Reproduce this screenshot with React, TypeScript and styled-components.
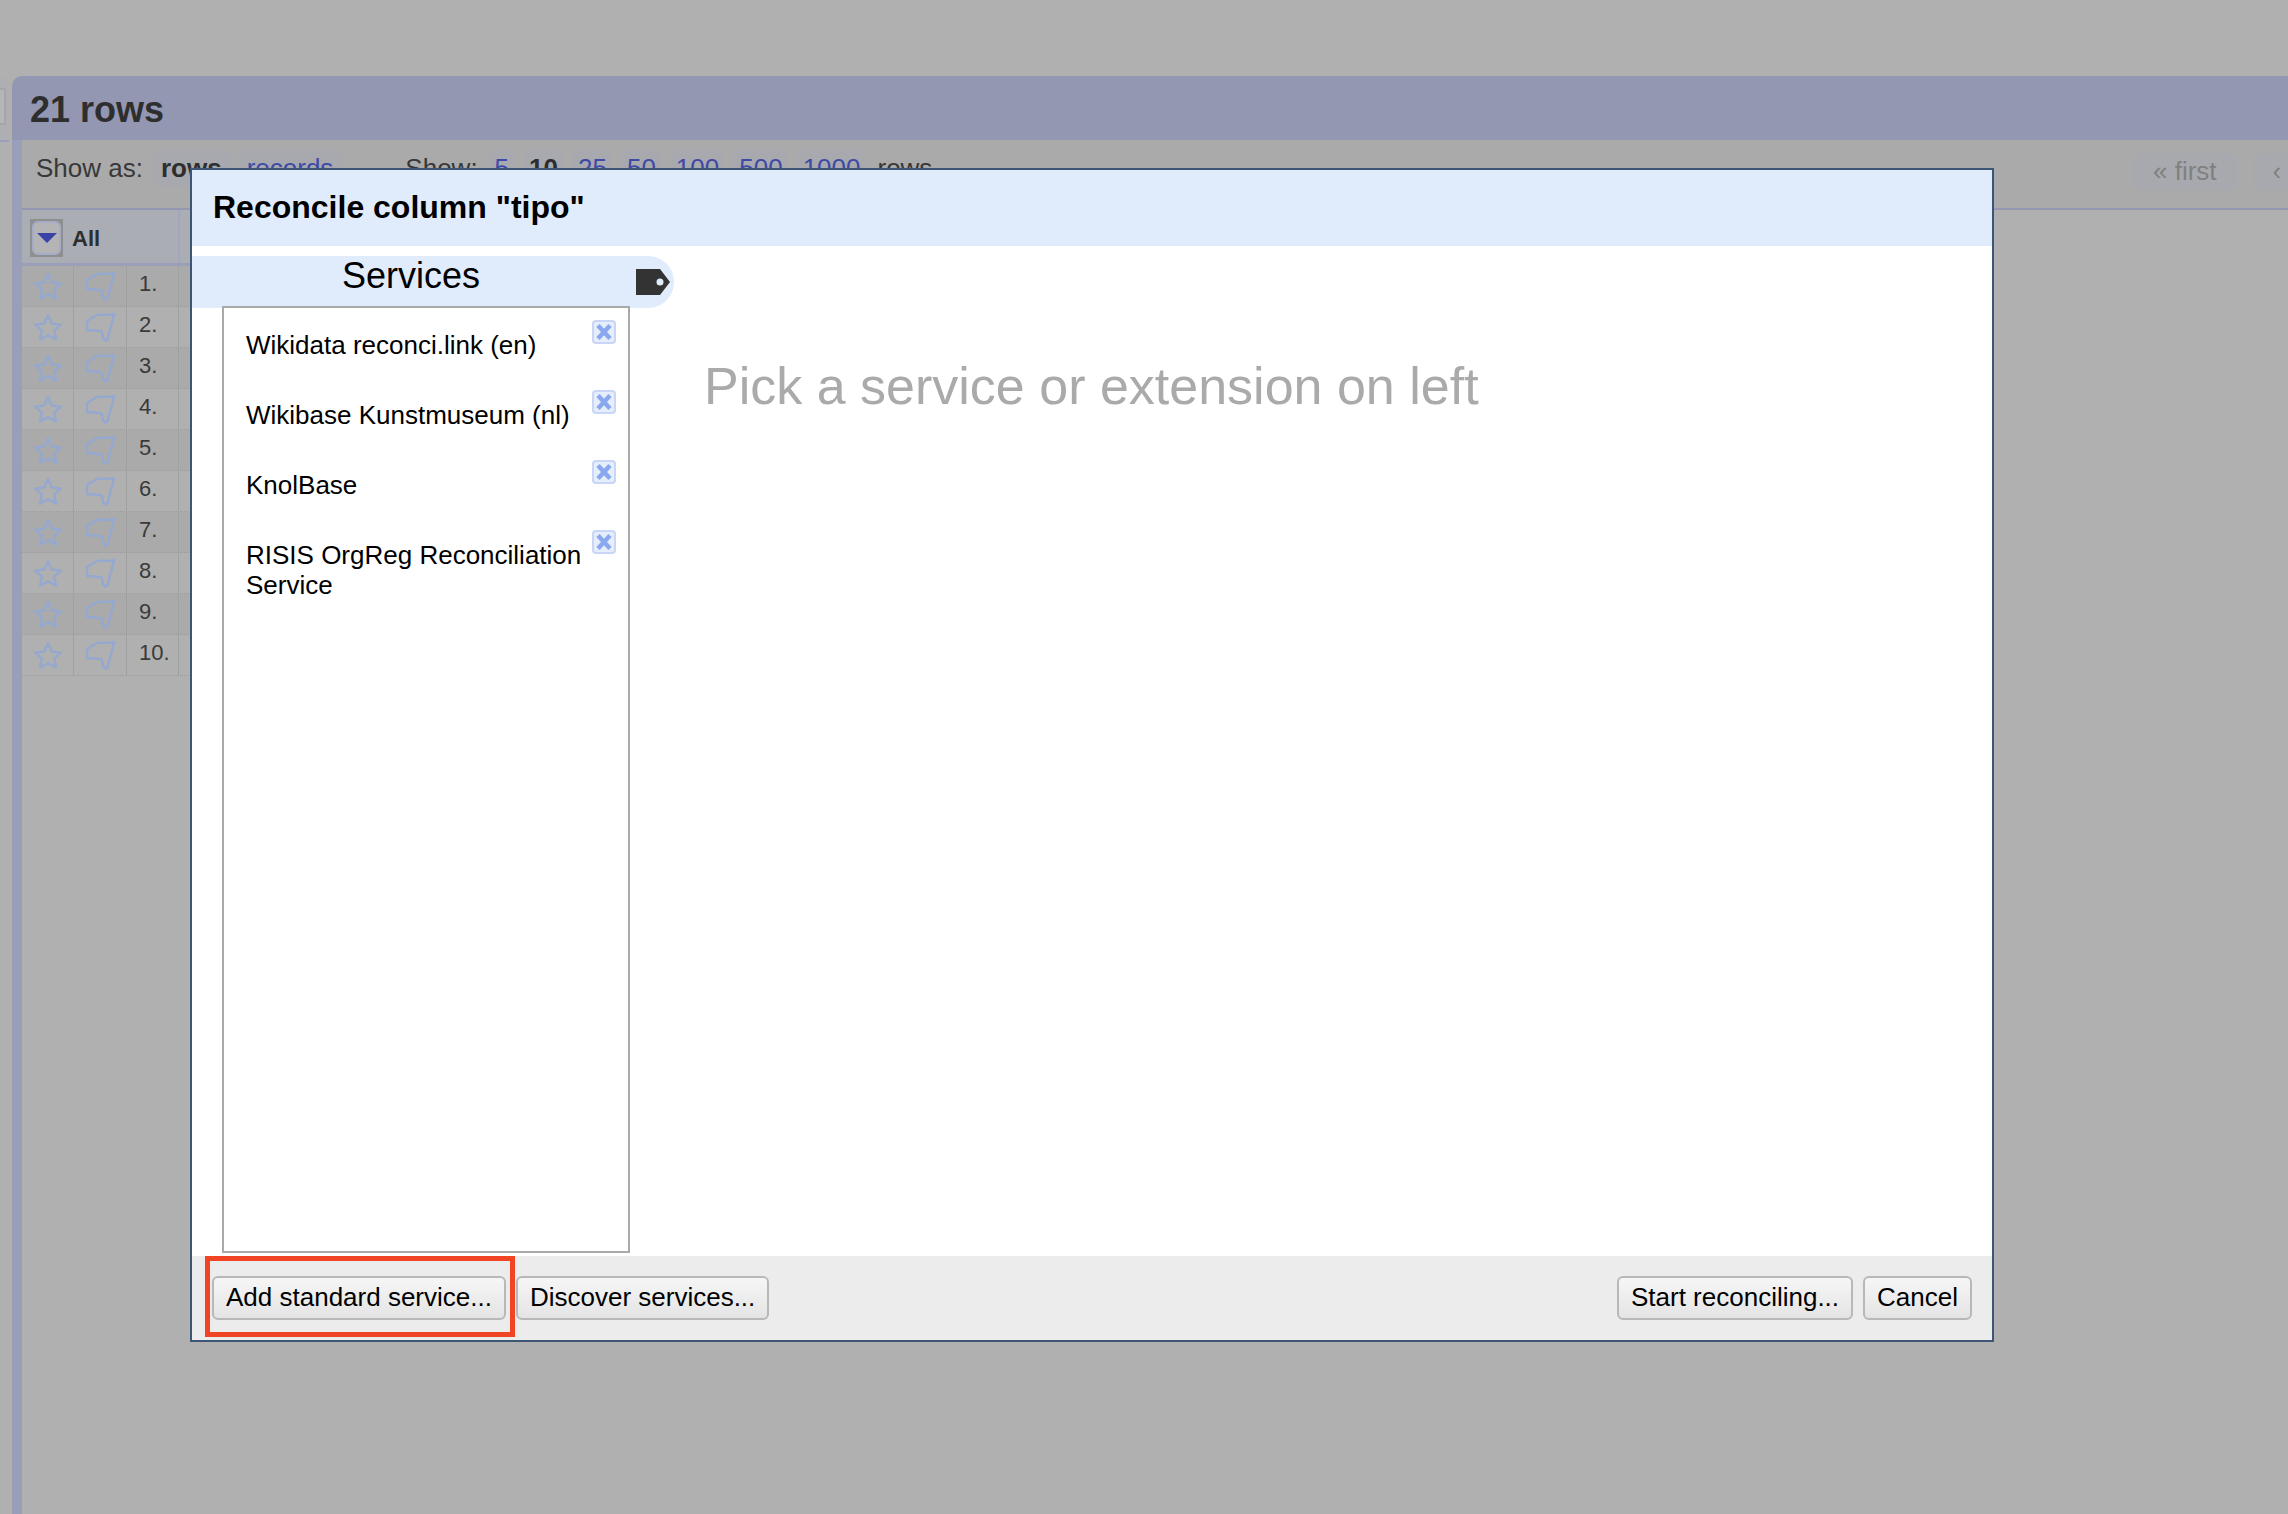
import { createGlobalStyle, styled } from "styled-components";

const GlobalStyle = createGlobalStyle`
  html, body {
    margin: 0;
    padding: 0;
    background: #b0b0b0;
    font-family: "Liberation Sans", Arial, sans-serif;
  }
  * { box-sizing: border-box; }
`;

const Page = styled.div`
  position: relative;
  width: 2288px;
  height: 1514px;
  padding-top: 76px;
  overflow: hidden;
  background: #b0b0b0;
  display: flex;
`;

const Rail = styled.div`
  width: 9px;
  height: 66px;
  flex: none;
  padding-top: 12px;
  border-top-right-radius: 9px;
  border-bottom: 2px solid #9a9fb9;
  background: #aeaeb3;
`;

const RailHandle = styled.div`
  width: 6px;
  height: 37px;
  background: #b6b6b6;
  border: 2px solid #a6a6a6;
  border-left: 0;
`;

const Workspace = styled.div`
  flex: 1;
  min-width: 0;
  margin-left: 3px;
  border-top-left-radius: 10px;
  overflow: hidden;
  display: flex;
  flex-direction: column;
`;

const CountBar = styled.div`
  height: 64px;
  flex: none;
  padding: 3px 0 0 18px;
  display: flex;
  align-items: center;
  background: #9397b2;
  color: #2e2e2e;
  font-size: 36px;
  font-weight: bold;
`;

const Body = styled.div`
  flex: 1;
  border-left: 10px solid #9a9fb9;
`;

const Toolbar = styled.div`
  height: 70px;
  padding: 10px 0 0 14px;
  display: flex;
  align-items: flex-start;
  background: #aaaaaa;
  border-bottom: 2px solid #9397b2;
  color: #383838;
  font-size: 26px;
  white-space: nowrap;
`;

const ToolLabel = styled.span<{ $left?: number }>`
  margin-left: ${({ $left }) => $left ?? 0}px;
  height: 37px;
  line-height: 36px;
`;

const Chip = styled.span<{ $active?: boolean; $left: number; $pad: number }>`
  height: 37px;
  line-height: 36px;
  padding: 0 ${({ $pad }) => $pad}px;
  margin-left: ${({ $left }) => $left}px;
  border-radius: 6px;
  background: #a8a9af;
  color: ${({ $active }) => ($active ? "#2e2e2e" : "#3f4aa6")};
  font-weight: ${({ $active }) => ($active ? "bold" : "normal")};
`;

const Pager = styled.div`
  margin-left: auto;
  margin-top: 3px;
  width: 155px;
  flex: none;
  display: flex;
  gap: 16px;
  overflow: hidden;
`;

const PagerChip = styled.span`
  height: 37px;
  flex: none;
  line-height: 36px;
  padding: 0 20px;
  border-radius: 6px;
  background: #a8a9ae;
  color: #808080;
`;

const GridHead = styled.div`
  width: 169px;
  height: 56px;
  display: flex;
  background: #aaadb3;
  border-bottom: 3px solid #9a9fb9;
`;

const AllCell = styled.div`
  width: 158px;
  display: flex;
  align-items: center;
  gap: 9px;
  padding: 2px 0 0 8px;
  border-right: 2px solid #a1a6bd;
  color: #2e2e2e;
  font-size: 22px;
  font-weight: bold;
  line-height: 28px;
`;

const AllLabel = styled.span`
  padding-top: 2px;
`;

const Dropdown = styled.span`
  width: 33px;
  height: 38px;
  flex: none;
  padding: 2px;
  background: #8f8f90;
`;

const DropdownFace = styled.span`
  width: 100%;
  height: 100%;
  display: flex;
  align-items: center;
  justify-content: center;
  border: 2px solid #a4acca;
  border-radius: 6px;
  background: #b4b4b6;

  &::before {
    content: "";
    width: 0;
    height: 0;
    border-left: 10px solid transparent;
    border-right: 10px solid transparent;
    border-top: 10px solid #3a44a6;
  }
`;

const Row = styled.div<{ $odd: boolean }>`
  height: 41px;
  display: flex;
  background: ${({ $odd }) => ($odd ? "#aaaaaa" : "#b0b0b0")};
  border-bottom: 1px dotted #9c9c9c;
  width: 169px;
`;

const Cell = styled.div<{ $width: number }>`
  width: ${({ $width }) => $width}px;
  flex: none;
  display: flex;
  align-items: center;
  border-right: 1px solid #a0a0a0;
`;

const IconCell = styled(Cell)`
  justify-content: center;
`;

const NumCell = styled(Cell)`
  padding: 0 0 5px 12px;
  color: #3a3a3a;
  font-size: 22px;
`;

const Dialog = styled.div`
  position: absolute;
  left: 190px;
  top: 168px;
  width: 1804px;
  height: 1174px;
  border: 2px solid #3d5675;
  background: #fff;
  display: flex;
  flex-direction: column;
`;

const DialogHeader = styled.div`
  height: 76px;
  flex: none;
  padding-left: 21px;
  padding-bottom: 2px;
  display: flex;
  align-items: center;
  background: #e0ecfb;
  color: #000;
  font-size: 32px;
  font-weight: bold;
`;

const DialogBody = styled.div`
  flex: 1;
  min-height: 0;
  display: flex;
  padding-top: 10px;
`;

const ServicesColumn = styled.div`
  width: 482px;
  flex: none;
  display: flex;
  flex-direction: column;
`;

const ServicesHeading = styled.div`
  position: relative;
  height: 52px;
  flex: none;
  border-radius: 0 26px 26px 0;
  background: #e0ecfb;
  color: #000;
  font-size: 36px;
  line-height: 40px;
`;

const HeadingText = styled.span`
  display: block;
  width: 438px;
  text-align: center;
`;

const TagIcon = styled.svg`
  position: absolute;
  left: 444px;
  top: 13px;
`;

const ServiceList = styled.div`
  position: relative;
  margin: -2px 0 0 30px;
  width: 408px;
  height: 947px;
  padding-top: 2px;
  border: 2px solid #a9a9a9;
  background: #fff;
`;

const ServiceItem = styled.div`
  position: relative;
  padding: 20px 40px 20px 22px;
  color: #000;
  font-size: 26px;
  line-height: 30px;
`;

const RemoveIcon = styled.svg`
  position: absolute;
  top: 10px;
  right: 12px;
`;

const Placeholder = styled.div`
  padding: 100px 0 0 30px;
  color: #aaaaaa;
  font-size: 52px;
  line-height: 60px;
`;

const Footer = styled.div`
  position: relative;
  height: 84px;
  flex: none;
  padding: 20px 20px 0 20px;
  display: flex;
  align-items: flex-start;
  background: #ececec;
`;

const Button = styled.button<{ $gap?: number }>`
  height: 44px;
  padding: 0 12px 2px;
  margin-left: ${({ $gap }) => $gap ?? 0}px;
  border: 2px solid #b8b8b8;
  border-radius: 6px;
  background: linear-gradient(#f6f6f6, #e4e4e4);
  color: #000;
  font-family: inherit;
  font-size: 26px;
  line-height: 36px;
  white-space: nowrap;
`;

const Spacer = styled.div`
  flex: 1;
`;

const Callout = styled.div`
  position: absolute;
  left: 13px;
  top: 0;
  width: 310px;
  height: 81px;
  border: 5px solid #f04525;
  pointer-events: none;
`;

const services = [
  "Wikidata reconci.link (en)",
  "Wikibase Kunstmuseum (nl)",
  "KnolBase",
  "RISIS OrgReg Reconciliation Service",
];

function Star() {
  return (
    <svg width="30" height="29" viewBox="0 0 28 27" fill="none" stroke="#94a8d0" strokeWidth="2.2" strokeLinejoin="round">
      <path d="M14 2l3.600 7.800 8.400 1-6.200 5.700 1.700 8.300L14 20.600 6.500 24.800l1.700-8.300L2 10.800l8.400-1z" />
    </svg>
  );
}

function Flag() {
  return (
    <svg width="31" height="30" viewBox="0 0 31 30" fill="none" stroke="#94a8d0" strokeWidth="2.4" strokeLinejoin="round" strokeLinecap="round">
      <path d="M29 2C24 4 18 2 12 3L2 9v9c6 1 12 0 15 2l1 6c1 3 4 3 5 0 1-6 4-14 6-24z" />
    </svg>
  );
}

export default function App() {
  return (
    <Page>
      <GlobalStyle />
      <Rail>
        <RailHandle />
      </Rail>
      <Workspace>
        <CountBar>21 rows</CountBar>
        <Body>
          <Toolbar>
            <ToolLabel>Show as:</ToolLabel>
            <Chip $active $left={9} $pad={9}>rows</Chip>
            <Chip $left={7} $pad={9}>records</Chip>
            <ToolLabel $left={63}>Show:</ToolLabel>
            <Chip $left={12} $pad={5}>5</Chip>
            <Chip $active $left={10} $pad={5}>10</Chip>
            <Chip $left={10} $pad={5}>25</Chip>
            <Chip $left={10} $pad={5}>50</Chip>
            <Chip $left={10} $pad={5}>100</Chip>
            <Chip $left={10} $pad={5}>500</Chip>
            <Chip $left={10} $pad={5}>1000</Chip>
            <ToolLabel $left={12}>rows</ToolLabel>
            <Pager>
              <PagerChip>« first</PagerChip>
              <PagerChip>‹</PagerChip>
            </Pager>
          </Toolbar>
          <GridHead>
            <AllCell>
              <Dropdown>
                <DropdownFace />
              </Dropdown>
              <AllLabel>All</AllLabel>
            </AllCell>
          </GridHead>
          {Array.from({ length: 10 }, (_, i) => (
            <Row key={i} $odd={i % 2 === 0}>
              <IconCell $width={52}>
                <Star />
              </IconCell>
              <IconCell $width={53}>
                <Flag />
              </IconCell>
              <NumCell $width={52}>{i + 1}.</NumCell>
            </Row>
          ))}
        </Body>
      </Workspace>

      <Dialog>
        <DialogHeader>Reconcile column "tipo"</DialogHeader>
        <DialogBody>
          <ServicesColumn>
            <ServicesHeading>
              <HeadingText>Services</HeadingText>
              <TagIcon width="34" height="26" viewBox="0 0 34 26">
                <path fillRule="evenodd" fill="#333" d="M0 0h24l10 13-10 13H0zM24 9.500a3.500 3.500 0 1 0 0 7 3.500 3.500 0 0 0 0-7z" />
              </TagIcon>
            </ServicesHeading>
            <ServiceList>
              {services.map((name) => (
                <ServiceItem key={name}>
                  {name}
                  <RemoveIcon width="24" height="24" viewBox="0 0 24 24">
                    <rect x="1" y="1" width="22" height="22" rx="3" fill="#e6edfb" stroke="#c9d6f5" strokeWidth="2" />
                    <path d="M6 5.500l12 13M18 5.500l-12 13" stroke="#8aa8ee" strokeWidth="4.500" />
                  </RemoveIcon>
                </ServiceItem>
              ))}
            </ServiceList>
          </ServicesColumn>
          <Placeholder>Pick a service or extension on left</Placeholder>
        </DialogBody>
        <Footer>
          <Button>Add standard service...</Button>
          <Button $gap={10}>Discover services...</Button>
          <Spacer />
          <Button>Start reconciling...</Button>
          <Button $gap={10}>Cancel</Button>
          <Callout />
        </Footer>
      </Dialog>
    </Page>
  );
}
